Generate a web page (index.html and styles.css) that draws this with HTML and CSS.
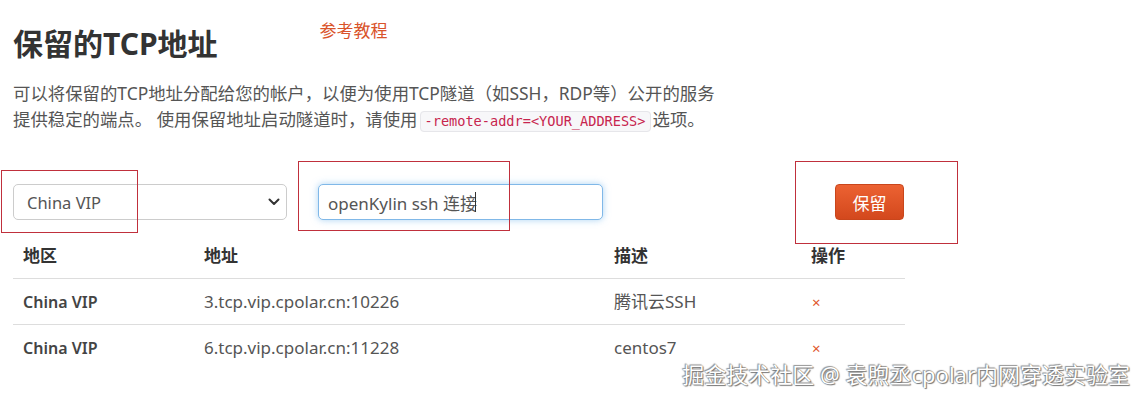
FILE: index.html
```html
<!DOCTYPE html>
<html lang="zh-CN">
<head>
<meta charset="utf-8">
<title>保留的TCP地址</title>
<link rel="stylesheet" href="styles.css">
</head>
<body>
<div class="page">
  <div class="head">
    <h1 class="title">保留的TCP地址</h1>
    <a class="ref-link" href="#">参考教程</a>
  </div>
  <p class="desc">可以将保留的TCP地址分配给您的帐户，以便为使用TCP隧道（如SSH，RDP等）公开的服务<br>提供稳定的端点。 使用保留地址启动隧道时，请使用<code class="code">-remote-addr=&lt;YOUR_ADDRESS&gt;</code>选项。</p>

  <form class="form-row">
    <div class="select-wrap">
      <select class="select">
        <option>China VIP</option>
      </select>
      <svg class="chevron" width="12" height="8" viewBox="0 0 12 8"><path d="M1.5 1.5 L6 6 L10.5 1.5" fill="none" stroke="#333" stroke-width="2" stroke-linecap="round" stroke-linejoin="round"/></svg>
    </div>
    <div class="input-wrap">
      <input class="input" type="text" value="openKylin ssh 连接"><span class="caret"></span>
    </div>
    <button class="btn" type="button">保留</button>
  </form>

  <table class="table">
    <thead>
      <tr><th class="c1">地区</th><th class="c2">地址</th><th class="c3">描述</th><th class="c4">操作</th></tr>
    </thead>
    <tbody>
      <tr><td class="region">China VIP</td><td>3.tcp.vip.cpolar.cn:10226</td><td>腾讯云SSH</td><td><span class="del">×</span></td></tr>
      <tr><td class="region">China VIP</td><td>6.tcp.vip.cpolar.cn:11228</td><td>centos7</td><td><span class="del">×</span></td></tr>
    </tbody>
  </table>

  <div class="mark mark-1"></div>
  <div class="mark mark-2"></div>
  <div class="mark mark-3"></div>
  <div class="watermark">掘金技术社区 @ 袁煦丞cpolar内网穿透实验室</div>
</div>
</body>
</html>
```

FILE: styles.css
```css
* { box-sizing: border-box; }
html, body { margin: 0; padding: 0; background: #fff; }
body {
  font-family: "Noto Sans", "Noto Sans CJK SC", sans-serif;
  color: #555;
  width: 1144px;
  height: 401px;
  overflow: hidden;
}
.page {
  position: relative;
  height: 401px;
  padding: 0 0 0 13px;
}
.head {
  display: flex;
  align-items: flex-start;
  padding-top: 24px;
}
.title {
  margin: 0;
  font-size: 30px;
  line-height: 40px;
  font-weight: 700;
  color: #333;
}
.ref-link {
  margin-left: 102px;
  margin-top: -4px;
  font-size: 17px;
  line-height: 22px;
  color: #d9532a;
  text-decoration: none;
}
.desc {
  margin: 16px 0 0;
  font-size: 17.4px;
  line-height: 26px;
  color: #555;
  white-space: nowrap;
}
.code {
  font-family: "DejaVu Sans Mono", "Liberation Mono", monospace;
  font-size: 13.6px;
  color: #c7254e;
  background: #f7f7f9;
  border: 1px solid #e6e6ea;
  border-radius: 4px;
  padding: 1px 4px 2px;
  margin: 0 2px;
}
.form-row {
  display: flex;
  align-items: center;
  margin-top: 50px;
  height: 36px;
}
.select-wrap {
  position: relative;
  width: 274px;
  height: 36px;
}
.select {
  appearance: none;
  -webkit-appearance: none;
  width: 100%;
  height: 36px;
  border: 1px solid #ccc;
  border-radius: 5px;
  background: #fff;
  padding: 0 12px 0 13px;
  font-family: "Noto Sans", "Noto Sans CJK SC", sans-serif;
  font-size: 16.5px;
  color: #555;
}
.chevron {
  position: absolute;
  right: 7px;
  top: 14px;
}
.input-wrap {
  position: relative;
  margin-left: 31px;
  width: 285px;
  height: 36px;
}
.input {
  width: 100%;
  height: 36px;
  border: 1px solid #80b8e8;
  border-radius: 5px;
  box-shadow: 0 0 7px rgba(102, 175, 233, 0.55);
  padding: 0 9px;
  font-family: "Noto Sans", "Noto Sans CJK SC", sans-serif;
  font-size: 17px;
  color: #555;
  outline: none;
}
.caret {
  position: absolute;
  left: 157px;
  top: 8px;
  width: 1px;
  height: 20px;
  background: #333;
}
.btn {
  margin-left: 232px;
  width: 69px;
  height: 36px;
  border: 1px solid #c9461c;
  border-radius: 4px;
  background: linear-gradient(#ec6232, #d3481d);
  color: #fff;
  font-family: "Noto Sans", "Noto Sans CJK SC", sans-serif;
  font-size: 17px;
  padding: 0;
}
.table {
  margin-top: 14px;
  width: 892px;
  border-collapse: collapse;
  font-size: 17px;
}
.table th {
  text-align: left;
  font-weight: 700;
  color: #333;
  padding: 11px 10px 11px;
  line-height: 22px;
  border-bottom: 1px solid #ddd;
}
.table td {
  padding: 12px 10px 11px;
  line-height: 22px;
  color: #555;
  border-top: 1px solid #ddd;
}
.table tbody tr:first-child td { border-top: none; }
.c1 { width: 181px; }
.c2 { width: 410px; }
.c3 { width: 197px; }
.c4 { width: 104px; }
.table td.region { font-weight: 600; color: #444; font-size: 16px; }
.del {
  color: #e0552b;
  font-size: 15px;
  padding-left: 1px;
}
.mark {
  position: absolute;
  border: 1px solid #c0303c;
}
.mark-1 { left: 1px; top: 170px; width: 137px; height: 63px; }
.mark-2 { left: 298px; top: 161px; width: 212px; height: 70px; }
.mark-3 { left: 795px; top: 161px; width: 163px; height: 83px; }
.watermark {
  position: absolute;
  right: 14px;
  top: 360px;
  font-size: 22px;
  line-height: 28px;
  color: #fff;
  text-shadow: 0 0 1px #666, 1px 1px 1px #777, -1px -1px 1px #999;
  white-space: nowrap;
}
```
